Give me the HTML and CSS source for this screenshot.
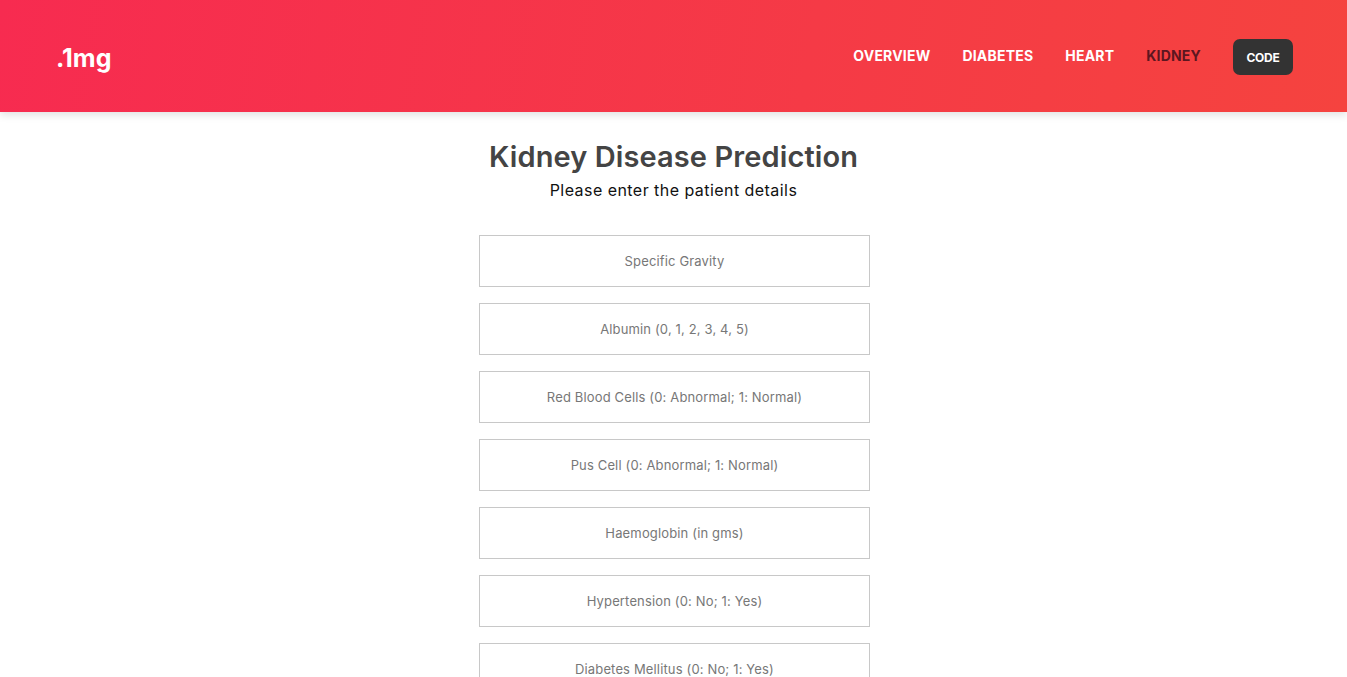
FILE: index.html
```html
<!DOCTYPE html>
<html lang="en">
<head>
<meta charset="utf-8">
<title>Kidney Disease Prediction</title>
<link rel="stylesheet" href="styles.css">
</head>
<body>
<header class="topbar">
  <a class="logo" href="#">.1mg</a>
  <nav class="nav">
    <a class="nav-link" href="#">OVERVIEW</a>
    <a class="nav-link" href="#">DIABETES</a>
    <a class="nav-link" href="#">HEART</a>
    <a class="nav-link nav-link-active" href="#">KIDNEY</a>
    <a class="code-btn" href="#">CODE</a>
  </nav>
</header>
<main class="content">
  <h1 class="title">Kidney Disease Prediction</h1>
  <p class="subtitle">Please enter the patient details</p>
  <form class="form">
    <input class="field" type="text" placeholder="Specific Gravity">
    <input class="field" type="text" placeholder="Albumin (0, 1, 2, 3, 4, 5)">
    <input class="field" type="text" placeholder="Red Blood Cells (0: Abnormal; 1: Normal)">
    <input class="field" type="text" placeholder="Pus Cell (0: Abnormal; 1: Normal)">
    <input class="field" type="text" placeholder="Haemoglobin (in gms)">
    <input class="field" type="text" placeholder="Hypertension (0: No; 1: Yes)">
    <input class="field" type="text" placeholder="Diabetes Mellitus (0: No; 1: Yes)">
    <input class="field" type="text" placeholder="Appetite (0: Good; 1: Poor)">
    <button class="submit" type="button">Predict</button>
  </form>
</main>
</body>
</html>
```

FILE: styles.css
```css
* { box-sizing: border-box; }
body {
  margin: 0;
  font-family: "Inter", "Open Sans", sans-serif;
  background: #fff;
  color: #333;
}
.topbar {
  height: 112px;
  display: flex;
  align-items: center;
  justify-content: space-between;
  padding: 0 54px 0 56px;
  background: linear-gradient(100deg, #f72b50 0%, #f53a46 60%, #f5433f 100%);
  box-shadow: 0 3px 8px rgba(0,0,0,0.12);
  position: relative;
}
.logo {
  color: #fff;
  text-decoration: none;
  font-size: 25px;
  font-weight: 700;
  letter-spacing: 0;
  margin-top: 4px;
}
.nav {
  display: flex;
  align-items: center;
}
.nav-link {
  color: #fff;
  text-decoration: none;
  font-size: 14px;
  font-weight: 700;
  margin-right: 32px;
  letter-spacing: 0.2px;
  margin-top: -2px;
}
.nav-link-active { color: #5c1620; }
.code-btn {
  display: flex;
  align-items: center;
  justify-content: center;
  width: 60px;
  height: 36px;
  margin-top: 2px;
  background: #333;
  color: #fff;
  border-radius: 7px;
  text-decoration: none;
  font-size: 12px;
  font-weight: 700;
  letter-spacing: -0.3px;
}
.content {
  display: flex;
  flex-direction: column;
  align-items: center;
  padding-top: 28px;
}
.title {
  margin: 0;
  font-size: 29px;
  font-weight: 600;
  color: #444;
  line-height: 34px;
  letter-spacing: 0.1px;
}
.subtitle {
  margin: 5px 0 0;
  font-size: 16px;
  color: #111;
  line-height: 22px;
  letter-spacing: 0.45px;
}
.form {
  display: flex;
  flex-direction: column;
  gap: 16px;
  margin: 34px 0 0 2px;
  width: 391px;
}
.field {
  height: 52px;
  width: 100%;
  border: 1px solid #c8c8c8;
  background: #fff;
  text-align: center;
  font-family: inherit;
  font-size: 13px;
  letter-spacing: 0.15px;
  color: #333;
  outline: none;
}
.field::placeholder { color: #777; }
.submit {
  height: 44px;
  border: 0;
  background: #333;
  color: #fff;
  font-family: inherit;
  font-weight: 700;
}
```
